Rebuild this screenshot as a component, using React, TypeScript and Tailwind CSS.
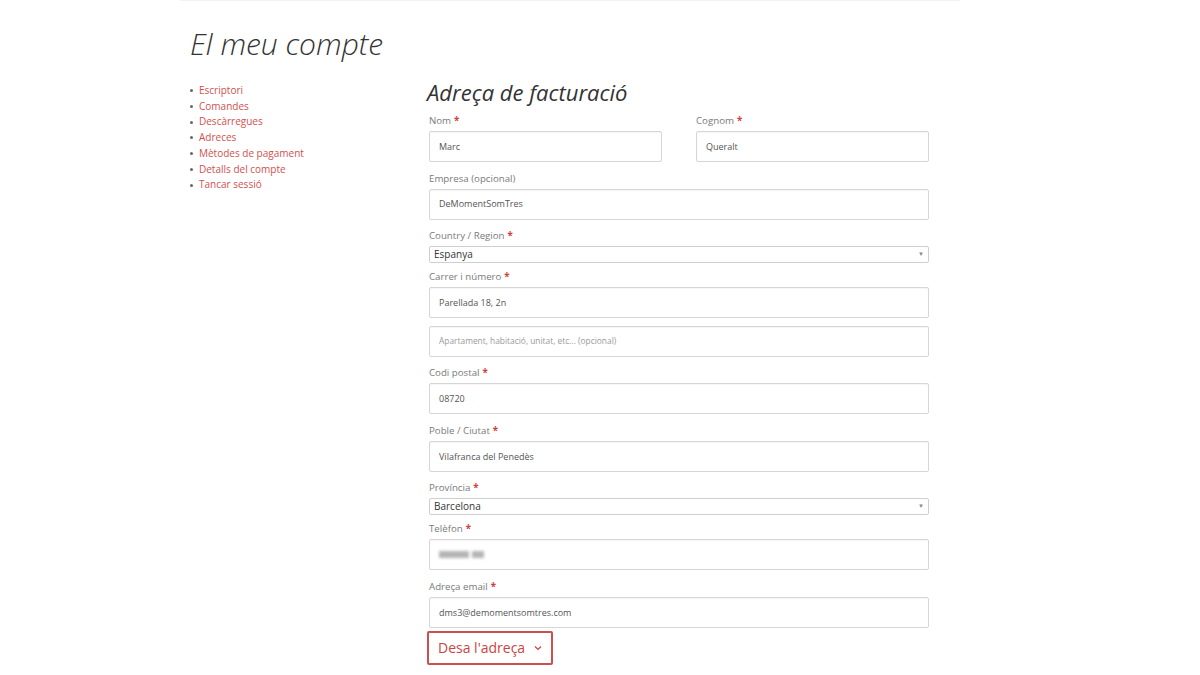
import React from 'react'

const links = [
	'Escriptori',
	'Comandes',
	'Descàrregues',
	'Adreces',
	'Mètodes de pagament',
	'Detalls del compte',
	'Tancar sessió',
]

/**
 * Field label with optional required star.
 */
function Label({ text, required }: { text: string; required?: boolean }) {
	return (
		<div className="mb-[2px] text-[9.7px] leading-[16px] text-[#7a7a7a]">
			{text}
			{required && <span className="ml-[3px] font-bold text-[#d23c3c]">*</span>}
		</div>
	)
}

/**
 * Text input look-alike.
 */
function Input({
	value,
	placeholder,
	blur,
}: {
	value?: string
	placeholder?: string
	blur?: boolean
}) {
	return (
		<div className="flex h-[31px] w-full items-center rounded-[2px] border border-[#d6d6d6] bg-white pl-[9px] text-[9px] text-[#555] shadow-[inset_0_1px_1px_rgba(0,0,0,0.04)]">
			{value && !blur && <span>{value}</span>}
			{blur && (
				<span className="flex items-center gap-[3px] blur-[1.5px]">
					<span className="h-[7px] w-[30px] bg-[#b5b5b5]" />
					<span className="h-[7px] w-[12px] bg-[#b5b5b5]" />
				</span>
			)}
			{placeholder && <span className="text-[8.4px] text-[#9a9a9a]">{placeholder}</span>}
		</div>
	)
}

/**
 * Select look-alike.
 */
function Select({ value }: { value: string }) {
	return (
		<div className="flex h-[17px] w-full items-center justify-between rounded-[2px] border border-[#cfcfcf] bg-white pl-[4px] pr-[4px] text-[10px] text-[#333]">
			<span>{value}</span>
			<span className="text-[6px] text-[#888]">▼</span>
		</div>
	)
}

/**
 * Field wrapper.
 */
function Field({
	label,
	required,
	className = 'mb-[8.6px]',
	children,
}: {
	label?: string
	required?: boolean
	className?: string
	children: React.ReactNode
}) {
	return (
		<div className={className}>
			{label && <Label text={label} required={required} />}
			{children}
		</div>
	)
}

export default function App() {
	return (
		<div
			className="min-h-[675px] w-full bg-white"
			style={{ fontFamily: '"Open Sans", "Liberation Sans", sans-serif' }}
		>
			<div className="ml-[180px] w-[780px] border-t border-[#f3f3f3] pl-[10px]">
				<h1 className="pt-[24px] text-[30px] font-light italic leading-[38px] text-[#333]">
					El meu compte
				</h1>
				<div className="mt-[14px] flex items-start">
					<ul className="w-[237px] shrink-0 pt-[6px]">
						{links.map((l) => (
							<li key={l} className="flex items-center text-[10px] leading-[15.7px]">
								<span className="mr-[6px] h-[3px] w-[3px] rounded-full bg-[#666]" />
								<span className="text-[#d24f4f]">{l}</span>
							</li>
						))}
					</ul>
					<div className="w-[502px]">
						<h2 className="pt-[1px] text-[22px] italic leading-[29px] text-[#333]">
							Adreça de facturació
						</h2>
						<div className="mt-[6px] pl-[2px]">
							<div className="flex gap-[34px]">
								<div className="w-[233px]">
									<Field label="Nom" required>
										<Input value="Marc" />
									</Field>
								</div>
								<div className="w-[233px]">
									<Field label="Cognom" required>
										<Input value="Queralt" />
									</Field>
								</div>
							</div>
							<Field label="Empresa (opcional)">
								<Input value="DeMomentSomTres" />
							</Field>
							<Field label="Country / Region" required className="mb-[6px]">
								<Select value="Espanya" />
							</Field>
							<Field label="Carrer i número" required className="mb-[8px]">
								<Input value="Parellada 18, 2n" />
							</Field>
							<Field className="mb-[8px]">
								<Input placeholder="Apartament, habitació, unitat, etc... (opcional)" />
							</Field>
							<Field label="Codi postal" required>
								<Input value="08720" />
							</Field>
							<Field label="Poble / Ciutat" required>
								<Input value="Vilafranca del Penedès" />
							</Field>
							<Field label="Província" required className="mb-[6px]">
								<Select value="Barcelona" />
							</Field>
							<Field label="Telèfon" required>
								<Input value="666 666" blur />
							</Field>
							<Field label="Adreça email" required className="mb-[3px]">
								<Input value="dms3@demomentsomtres.com" />
							</Field>
						</div>
						<button className="flex h-[34px] w-[126px] items-center rounded-[2px] border-2 border-[#c9504f] bg-white pl-[9px] text-[14px] text-[#c94444]">
							Desa l'adreça
							<svg
								className="ml-[9px]"
								width="8"
								height="6"
								viewBox="0 0 8 6"
								fill="none"
								stroke="#c94444"
								strokeWidth="1.2"
							>
								<path d="M1 1.5 L4 4.5 L7 1.5" />
							</svg>
						</button>
					</div>
				</div>
			</div>
		</div>
	)
}
